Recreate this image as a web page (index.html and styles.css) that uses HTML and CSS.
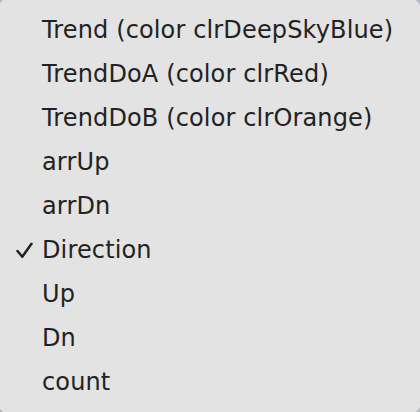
FILE: index.html
```html
<!DOCTYPE html>
<html>
<head>
<meta charset="utf-8">
<link rel="stylesheet" href="styles.css">
</head>
<body>
<div class="menu">
  <div class="item"><span class="mark"></span><span class="label">Trend (color clrDeepSkyBlue)</span></div>
  <div class="item"><span class="mark"></span><span class="label">TrendDoA (color clrRed)</span></div>
  <div class="item"><span class="mark"></span><span class="label">TrendDoB (color clrOrange)</span></div>
  <div class="item"><span class="mark"></span><span class="label">arrUp</span></div>
  <div class="item"><span class="mark"></span><span class="label">arrDn</span></div>
  <div class="item"><span class="mark"><svg width="17" height="17" viewBox="0 0 17 17"><path d="M1.5 9 L6.3 14.8 L15.5 1.8" fill="none" stroke="#222" stroke-width="2.5" stroke-linecap="round" stroke-linejoin="round"/></svg></span><span class="label">Direction</span></div>
  <div class="item"><span class="mark"></span><span class="label">Up</span></div>
  <div class="item"><span class="mark"></span><span class="label">Dn</span></div>
  <div class="item"><span class="mark"></span><span class="label">count</span></div>
</div>
</body>
</html>
```
FILE: styles.css
```css
html, body {
  margin: 0;
  padding: 0;
  background: #b4b9c0;
  width: 420px;
  height: 412px;
  overflow: hidden;
}
.menu {
  box-sizing: border-box;
  width: 423px;
  height: 416px;
  margin: -2px 0 0 -2px;
  background: #e3e3e3;
  border-radius: 12px;
  padding: 10px 0 0 2px;
  display: flex;
  flex-direction: column;
  font-family: "DejaVu Sans", Verdana, sans-serif;
  font-size: 24px;
  letter-spacing: 0.14px;
  color: #222;
}
.item {
  height: 44px;
  display: flex;
  align-items: center;
}
.mark {
  width: 42px;
  display: flex;
  justify-content: flex-end;
  padding-right: 9px;
  box-sizing: border-box;
}
.mark svg { display: block; }
.label { white-space: nowrap; }
```
